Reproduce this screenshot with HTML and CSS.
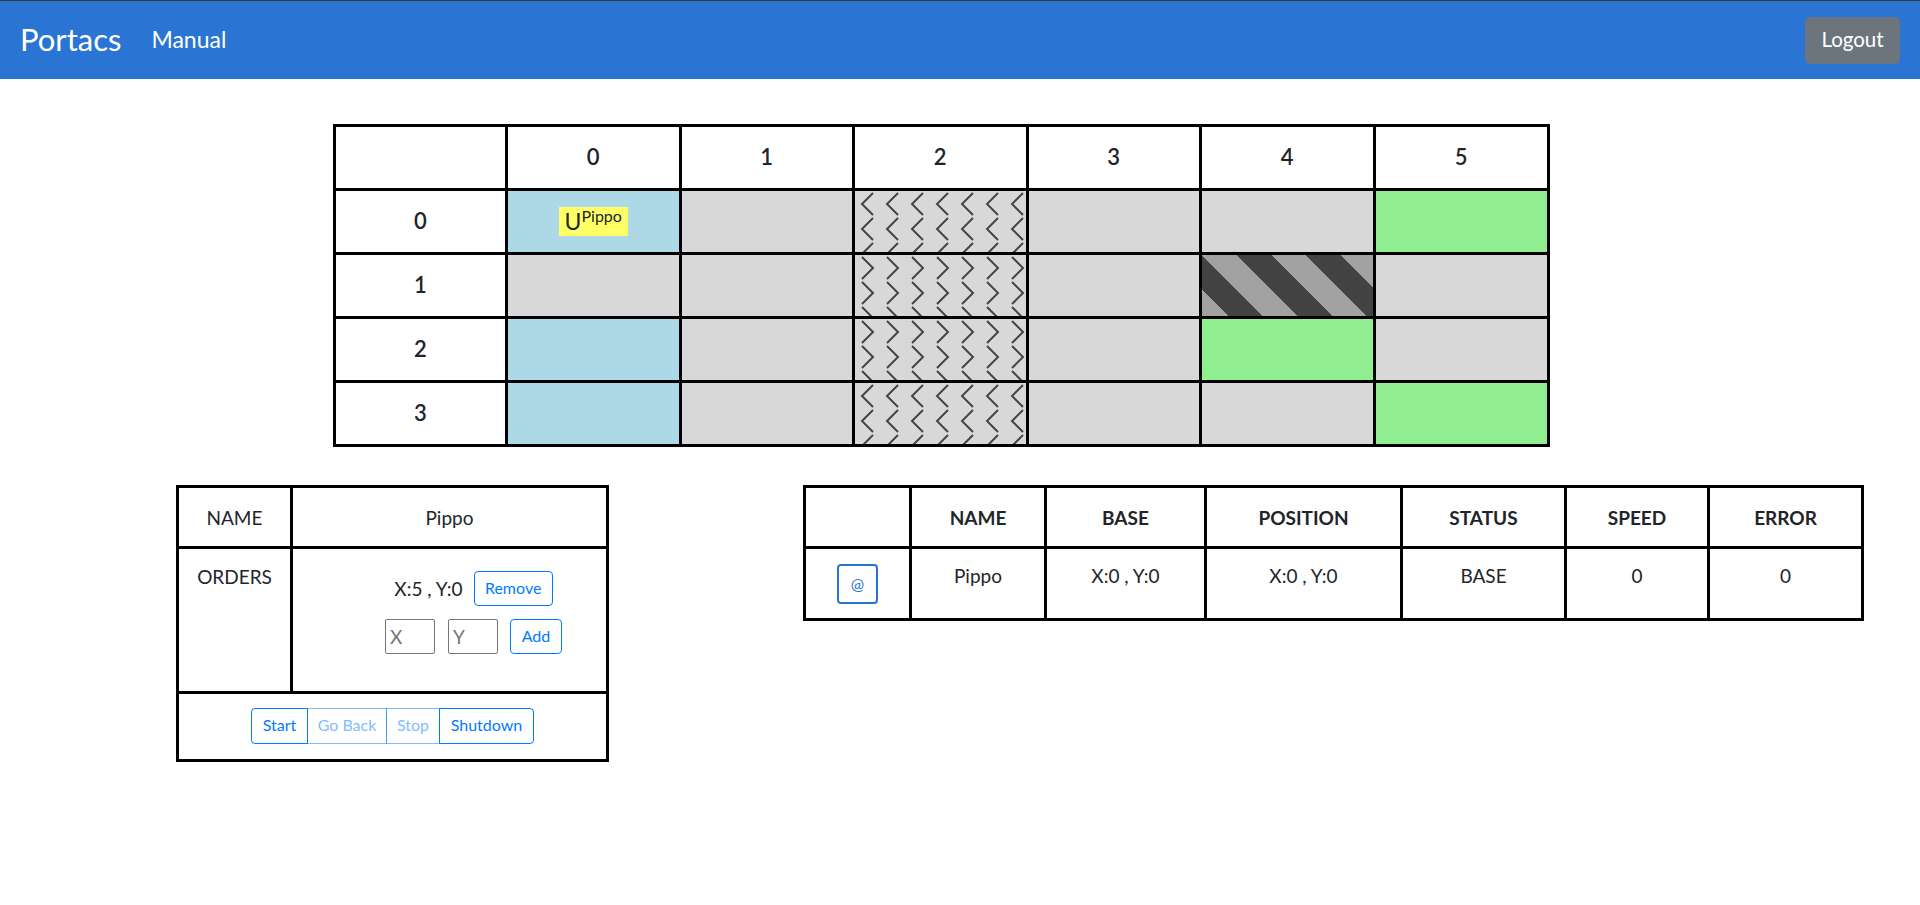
FILE: index.html
```html
<!DOCTYPE html>
<html lang="en">
  <head>
    <meta charset="UTF-8" />
    <meta name="viewport" content="width=device-width, initial-scale=1.0" />
    <title>Portacs</title>
    <link rel="stylesheet" href="styles.css">
  </head>
  <body>
    <!-- Patterns shared by the ramp cells of the map -->
    <svg class="defs" width="0" height="0" aria-hidden="true">
      <defs>
        <pattern id="arrow-left" width="25" height="25" patternUnits="userSpaceOnUse">
          <path d="M18 2 L7 13 L18 24" fill="none" stroke="#444" stroke-width="2" />
        </pattern>
        <pattern id="arrow-right" width="25" height="25" patternUnits="userSpaceOnUse">
          <path d="M7 2 L18 13 L7 24" fill="none" stroke="#444" stroke-width="2" />
        </pattern>
      </defs>
    </svg>

    <nav class="navbar">
      <a class="brand" href="#">Portacs</a>
      <a class="nav-link" href="#">Manual</a>
      <button class="logout" type="button">Logout</button>
    </nav>

    <main class="content">
      <table class="map">
        <thead>
          <tr>
            <th></th>
            <th>0</th>
            <th>1</th>
            <th>2</th>
            <th>3</th>
            <th>4</th>
            <th>5</th>
          </tr>
        </thead>
        <tbody>
          <tr>
            <th>0</th>
            <td class="cell-base"><span class="unit">U<sup>Pippo</sup></span></td>
            <td class="cell-road"></td>
            <td class="cell-road"><svg class="tile"><rect width="100%" height="100%" fill="url(#arrow-left)" /></svg></td>
            <td class="cell-road"></td>
            <td class="cell-road"></td>
            <td class="cell-goal"></td>
          </tr>
          <tr>
            <th>1</th>
            <td class="cell-road"></td>
            <td class="cell-road"></td>
            <td class="cell-road"><svg class="tile"><rect width="100%" height="100%" fill="url(#arrow-right)" /></svg></td>
            <td class="cell-road"></td>
            <td><div class="hazard"></div></td>
            <td class="cell-road"></td>
          </tr>
          <tr>
            <th>2</th>
            <td class="cell-base"></td>
            <td class="cell-road"></td>
            <td class="cell-road"><svg class="tile"><rect width="100%" height="100%" fill="url(#arrow-right)" /></svg></td>
            <td class="cell-road"></td>
            <td class="cell-goal"></td>
            <td class="cell-road"></td>
          </tr>
          <tr>
            <th>3</th>
            <td class="cell-base"></td>
            <td class="cell-road"></td>
            <td class="cell-road"><svg class="tile"><rect width="100%" height="100%" fill="url(#arrow-left)" /></svg></td>
            <td class="cell-road"></td>
            <td class="cell-road"></td>
            <td class="cell-goal"></td>
          </tr>
        </tbody>
      </table>

      <div class="panels">
        <table class="detail">
          <colgroup>
            <col class="col-label" />
            <col />
          </colgroup>
          <tbody>
            <tr class="detail-name">
              <td>NAME</td>
              <td>Pippo</td>
            </tr>
            <tr class="detail-orders">
              <td class="label">ORDERS</td>
              <td>
                <div class="order-list">
                  <div class="order-row order-item">
                    <span>X:5 , Y:0</span>
                    <button class="btn btn-remove" type="button">Remove</button>
                  </div>
                  <form class="order-row order-form">
                    <input class="coord" type="text" placeholder="X" />
                    <input class="coord" type="text" placeholder="Y" />
                    <button class="btn btn-add" type="button">Add</button>
                  </form>
                </div>
              </td>
            </tr>
            <tr class="detail-actions">
              <td colspan="2">
                <div class="btn-group">
                  <button class="btn btn-start" type="button">Start</button>
                  <button class="btn btn-back" type="button" disabled>Go Back</button>
                  <button class="btn btn-stop" type="button" disabled>Stop</button>
                  <button class="btn btn-shutdown" type="button">Shutdown</button>
                </div>
              </td>
            </tr>
          </tbody>
        </table>

        <table class="units">
          <colgroup>
            <col class="col-at" />
            <col class="col-name" />
            <col class="col-base" />
            <col class="col-position" />
            <col class="col-status" />
            <col class="col-speed" />
            <col class="col-error" />
          </colgroup>
          <thead>
            <tr>
              <th></th>
              <th>NAME</th>
              <th>BASE</th>
              <th>POSITION</th>
              <th>STATUS</th>
              <th>SPEED</th>
              <th>ERROR</th>
            </tr>
          </thead>
          <tbody>
            <tr>
              <td><button class="btn btn-at" type="button">@</button></td>
              <td>Pippo</td>
              <td>X:0 , Y:0</td>
              <td>X:0 , Y:0</td>
              <td>BASE</td>
              <td>0</td>
              <td>0</td>
            </tr>
          </tbody>
        </table>
      </div>
    </main>
  </body>
</html>
```

FILE: styles.css
```css
body {
  margin: 0;
  background-color: #fff;
  color: #212529;
  font-family: Lato, "Open Sans", sans-serif;
  font-size: 19px;
}
.defs {
  display: block;
  height: 0;
}
.navbar {
  display: flex;
  align-items: center;
  height: 78px;
  padding: 0 20px;
  background-color: #2a75d4;
  border-top: 1px solid #343a40;
}
.brand {
  color: #fff;
  font-size: 31px;
  text-decoration: none;
  margin-right: 30px;
  padding-bottom: 2px;
}
.nav-link {
  color: #fff;
  font-size: 23px;
  text-decoration: none;
  padding-bottom: 2px;
}
.logout {
  margin-left: auto;
  width: 95px;
  height: 47px;
  padding: 0 0 2px;
  background-color: #6c757d;
  color: #fff;
  border: 1px solid #6c757d;
  border-radius: 5px;
  font-family: inherit;
  font-size: 20.5px;
}
.content {
  padding-top: 45px;
}
table {
  border-collapse: collapse;
  text-align: center;
}
th,
td {
  border: 3px solid #000;
  padding: 0;
}
.map {
  table-layout: fixed;
  width: 1217px;
  margin-left: 333px;
}
.map th {
  width: 170.5px;
  height: 59px;
  padding-bottom: 2px;
  font-size: 22px;
  font-weight: 600;
}
.map th:first-child {
  width: 169px;
}
.map th:last-child {
  width: auto;
}
.map td {
  height: 61px;
  vertical-align: top;
}
.cell-base {
  background-color: lightblue;
}
.cell-road {
  background-color: #d8d8d8;
}
.cell-goal {
  background-color: lightgreen;
}
.hazard {
  height: 61px;
  background-image: repeating-linear-gradient(45deg, #a2a2a2 0, #a2a2a2 18.6px, #424242 18.6px, #424242 43.1px, #a2a2a2 43.1px, #a2a2a2 49px);
}
.tile {
  display: block;
  width: 100%;
  height: 61px;
}
.unit {
  display: inline-block;
  margin-top: 16px;
  padding: 0 6px;
  background-color: #ffff66;
  font-size: 23px;
  line-height: 29px;
}
.unit sup {
  font-size: 16px;
  line-height: 0;
  vertical-align: 8px;
}
.panels {
  display: flex;
  justify-content: space-between;
  align-items: flex-start;
  margin-top: 38px;
  padding: 0 56px 0 176px;
}
.detail {
  table-layout: fixed;
  width: 433px;
}
.col-label {
  width: 114px;
}
.label {
  vertical-align: top;
  padding-top: 16px;
}
.detail-name td {
  height: 58px;
}
.detail-orders td {
  height: 142px;
  vertical-align: top;
}
.detail-orders .label {
  height: 126px;
}
.order-list {
  padding: 22px 0 0 48px;
}
.detail-actions td {
  height: 63px;
  padding-bottom: 2px;
}
.order-row {
  display: flex;
  justify-content: center;
  align-items: center;
  gap: 13px;
}
.order-item {
  gap: 11px;
}
.order-form {
  margin-top: 13px;
}
.coord {
  box-sizing: border-box;
  width: 50px;
  height: 35px;
  padding: 0 4px;
  border: 1px solid #767676;
  border-radius: 2px;
  font-family: inherit;
  font-size: 19px;
}
.btn {
  padding: 0 0 2px;
  height: 36px;
  background-color: #fff;
  color: #007bff;
  border: 1px solid #007bff;
  border-radius: 4px;
  font-family: inherit;
  font-size: 16px;
}
.btn:disabled {
  opacity: 0.5;
}
.btn-remove {
  width: 79px;
  height: 35px;
}
.btn-add {
  width: 52px;
  height: 35px;
  margin-left: -1px;
}
.btn-group {
  display: inline-flex;
  vertical-align: middle;
}
.btn-group .btn {
  border-radius: 0;
  margin-left: -1px;
}
.btn-group .btn-start {
  width: 57px;
  border-radius: 4px 0 0 4px;
  margin-left: 0;
}
.btn-group .btn-back {
  width: 80px;
}
.btn-group .btn-stop {
  width: 54px;
}
.btn-group .btn-shutdown {
  width: 95px;
  border-radius: 0 4px 4px 0;
}
.units {
  table-layout: fixed;
  width: 1061px;
}
.col-at {
  width: 106px;
}
.col-name {
  width: 135px;
}
.col-base {
  width: 160px;
}
.col-position {
  width: 196px;
}
.col-status {
  width: 164px;
}
.col-speed {
  width: 143px;
}
.units th {
  height: 58px;
  font-weight: 700;
}
.units td {
  height: 54px;
  vertical-align: top;
  padding-top: 15px;
}
.units .btn-at {
  width: 41px;
  height: 40px;
  border: 2px solid #2a75d4;
  color: #2a75d4;
  font-size: 16px;
}
```
